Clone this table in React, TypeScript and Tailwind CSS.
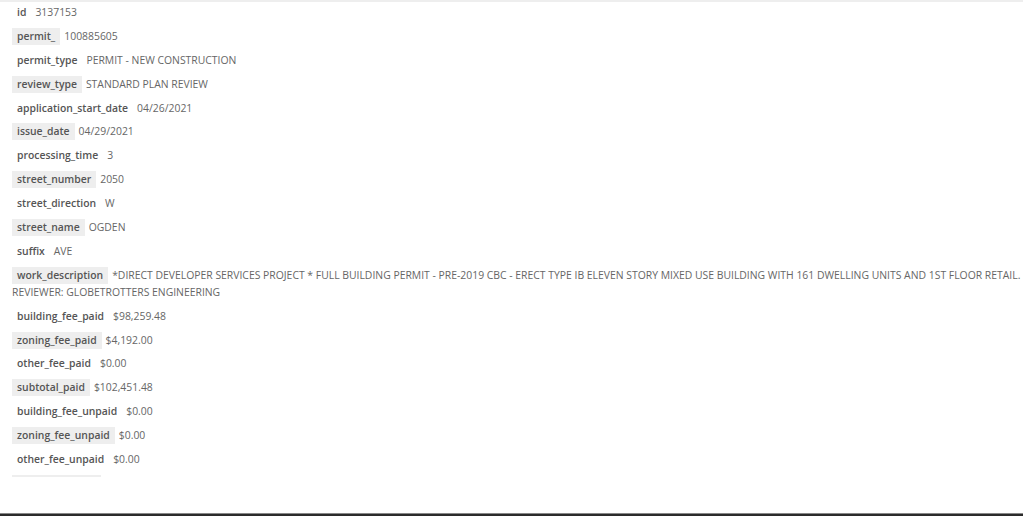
const rows: [string, string][] = [
  ["id", "3137153"],
  ["permit_", "100885605"],
  ["permit_type", "PERMIT - NEW CONSTRUCTION"],
  ["review_type", "STANDARD PLAN REVIEW"],
  ["application_start_date", "04/26/2021"],
  ["issue_date", "04/29/2021"],
  ["processing_time", "3"],
  ["street_number", "2050"],
  ["street_direction", "W"],
  ["street_name", "OGDEN"],
  ["suffix", "AVE"],
  [
    "work_description",
    "*DIRECT DEVELOPER SERVICES PROJECT * FULL BUILDING PERMIT - PRE-2019 CBC - ERECT TYPE IB ELEVEN STORY MIXED USE BUILDING WITH 161 DWELLING UNITS AND 1ST FLOOR RETAIL. REVIEWER: GLOBETROTTERS ENGINEERING",
  ],
  ["building_fee_paid", "$98,259.48"],
  ["zoning_fee_paid", "$4,192.00"],
  ["other_fee_paid", "$0.00"],
  ["subtotal_paid", "$102,451.48"],
  ["building_fee_unpaid", "$0.00"],
  ["zoning_fee_unpaid", "$0.00"],
  ["other_fee_unpaid", "$0.00"],
];

export default function App() {
  return (
    <div className="w-[1023px] h-[516px] flex flex-col bg-white font-['Open_Sans',sans-serif] text-[10.4px]">
      <div className="flex-1 border-t-2 border-[#eeeeee] pl-3 pr-[2px] pt-[2px]">
        {rows.map(([key, value], i) => (
          <div key={key} className="leading-[17px] mb-[6.9px] text-[#666]">
            <span
              className={`inline-block px-[5px] mr-[4px] font-semibold text-[#555] ${
                i % 2 === 1 ? "bg-[#eeeeee]" : ""
              }`}
            >
              {key}
            </span>
            {value}
          </div>
        ))}
        <div className="w-[89px] h-[2px] bg-[#eeeeee] mt-[4px]" />
      </div>
      <div className="h-[3px] bg-[#2b2b2b] border-t border-[#888]" />
    </div>
  );
}
